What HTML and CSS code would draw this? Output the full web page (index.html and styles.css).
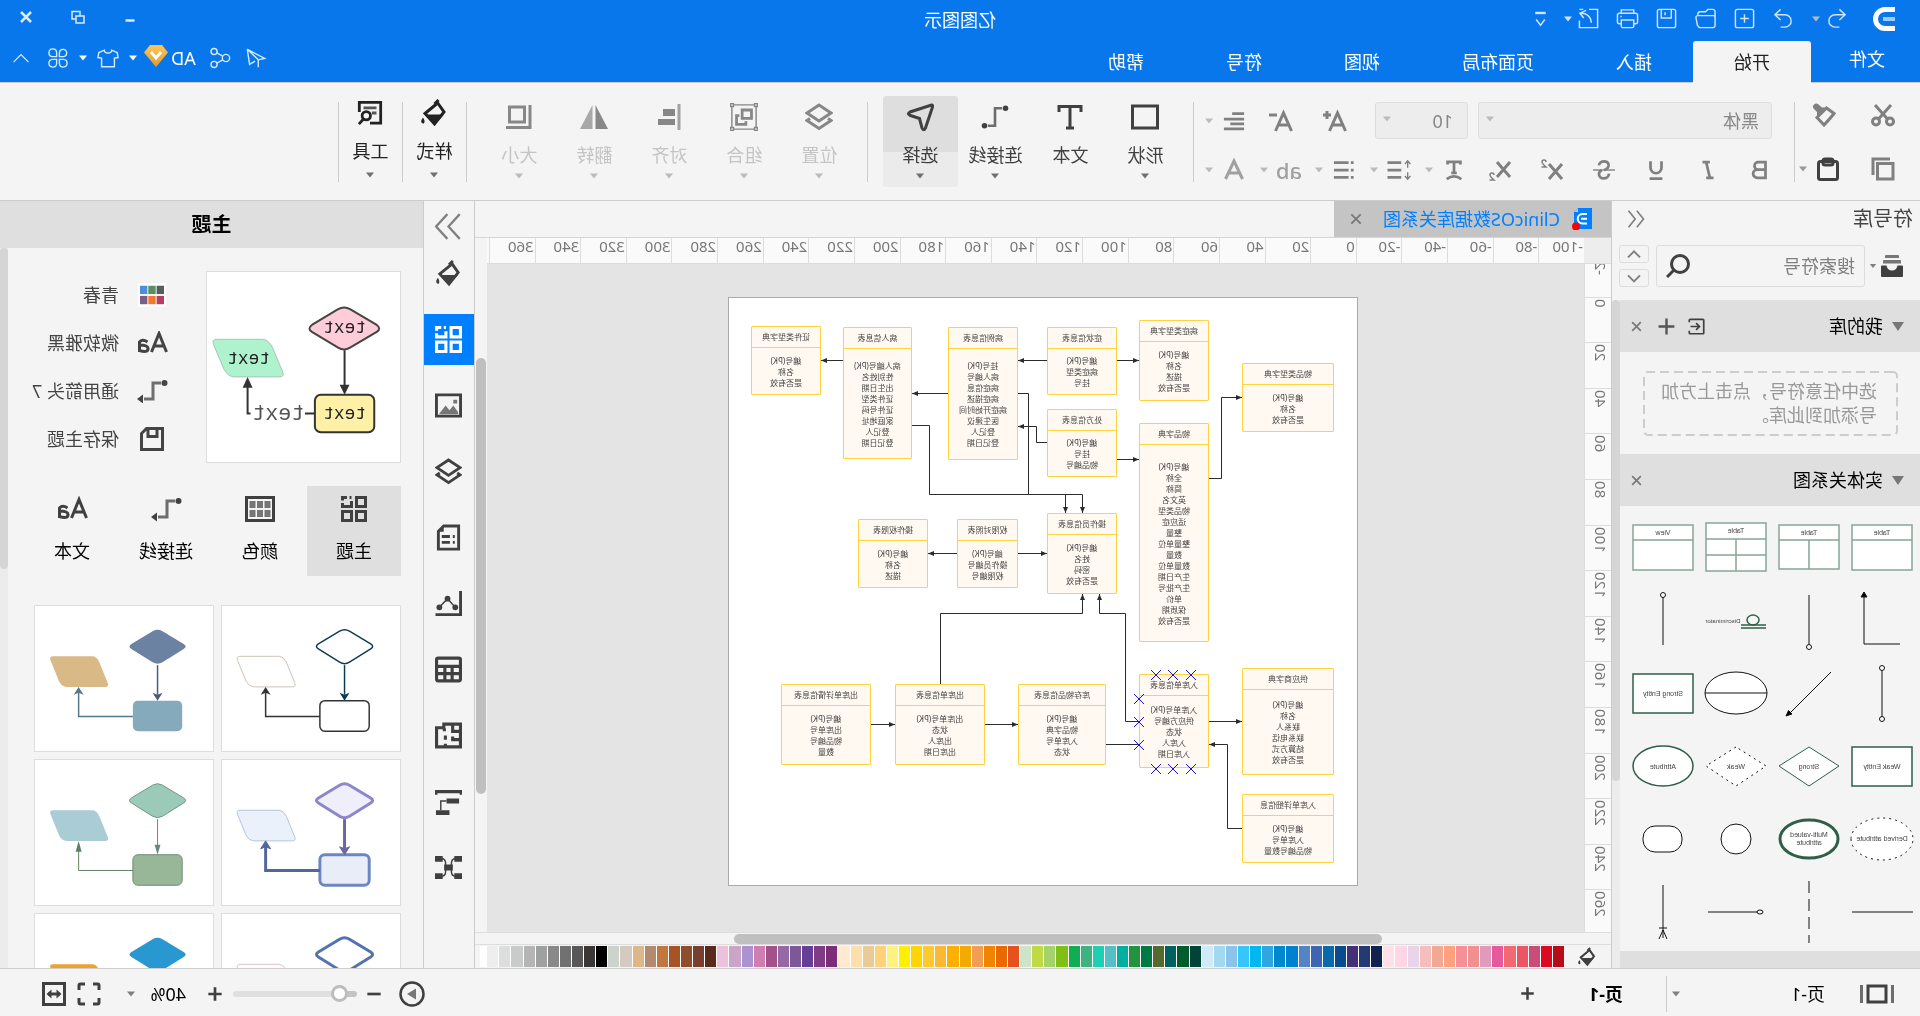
FILE: index.html
```html
<!DOCTYPE html>
<html lang="zh-CN">
<head>
<meta charset="utf-8">
<meta name="viewport" content="width=device-width, initial-scale=1">
<title>亿图图示</title>
<link rel="stylesheet" href="styles.css">
</head>
<body>
<svg class="defs" aria-hidden="true">
  <defs>
    <symbol id="i-caret" viewBox="0 0 10 6"><path class="solid" d="M1 0.5h8L5 5.5z"/></symbol>
    <symbol id="i-undo" viewBox="0 0 24 24"><path d="M9 2.500L3 8l6 5.500M3.500 8h10a6.500 6.500 0 0 1 0 13H9"/></symbol>
    <symbol id="i-redo" viewBox="0 0 24 24"><path d="M15 2.500L21 8l-6 5.500M20.500 8h-10a6.500 6.500 0 0 0 0 13H15"/></symbol>
    <symbol id="i-new" viewBox="0 0 24 24"><rect x="2.500" y="2.500" width="19" height="19" rx="2"/><path d="M12 7.500v9M7.500 12h9"/></symbol>
    <symbol id="i-open" viewBox="0 0 24 24"><path d="M2 9.500V19a2.500 2.500 0 0 0 2.500 2.500h14L20.500 19 22 11a2 2 0 0 0-2-2H4a2 2 0 0 0-2 2M2 10V5a2.500 2.500 0 0 1 2.500-2.500h5L12 5h5.500A2.500 2.500 0 0 1 20 7.500V9"/></symbol>
    <symbol id="i-disk" viewBox="0 0 24 24"><rect x="2.500" y="2.500" width="19" height="19" rx="2"/><path d="M7 2.500v9h10.500v-9M13.500 5.500v3"/></symbol>
    <symbol id="i-print" viewBox="0 0 24 24"><path d="M5.500 6.500V3h13v3.500M5 17.500H3.500A2 2 0 0 1 1.500 15.500V8.500a2 2 0 0 1 2-2h17a2 2 0 0 1 2 2v7a2 2 0 0 1-2 2H19M5.500 13.500h13V20a1.500 1.500 0 0 1-1.500 1.500H7A1.500 1.500 0 0 1 5.500 20zM18 10h1.500"/></symbol>
    <symbol id="i-export" viewBox="0 0 24 24"><path d="M11.500 2.500H2.500v19h19V14M14.500 3.500L21 6.500l-4 5M20.500 6.500C14 6 9.500 10 9 16.500M21.500 2.500h-4"/></symbol>
    <symbol id="i-custom" viewBox="0 0 24 24"><path class="solid" d="M6.500 5h11v2.500h-11z"/><path d="M7.500 13l4.500 6 4.500-6"/></symbol>
    <symbol id="i-plane" viewBox="0 0 24 24"><path d="M21.500 2.500L2.500 12.500l7 1.500zM21.500 2.500L19 19l-6-3.500M21.500 2.500L9.500 14v8"/></symbol>
    <symbol id="i-share" viewBox="0 0 24 24"><circle cx="5.500" cy="12" r="4"/><circle cx="18.500" cy="5" r="3.300"/><circle cx="18.500" cy="19" r="3.300"/><path d="M9 10l6.500-3.500M9 14l6.500 3.500"/></symbol>
    <symbol id="i-shirt" viewBox="0 0 24 24"><path d="M8 3.500a4 3 0 0 0 8 0l6 2.500 1 5.500-4 .5V21.500H5V12l-4-.5L2 6z"/></symbol>
    <symbol id="i-clover" viewBox="0 0 24 24"><path d="M10.500 10.500H6A4 4 0 1 1 10.500 6zM13.500 10.500V6A4.200 4.200 0 1 1 18 10.500zM10.500 13.500V18A4.200 4.200 0 1 1 6 13.500zM13.500 13.500H18A4.200 4.200 0 1 1 13.500 18z"/></symbol>
    <symbol id="i-up" viewBox="0 0 24 24"><path d="M3 17l9-9 9 9"/></symbol>
    <symbol id="i-down" viewBox="0 0 24 24"><path d="M3 8l9 9 9-9"/></symbol>
    <symbol id="i-x" viewBox="0 0 24 24"><path d="M4 4l16 16M20 4L4 20"/></symbol>
    <symbol id="i-plus" viewBox="0 0 24 24"><path d="M12 2v20M2 12h20"/></symbol>
    <symbol id="i-minus" viewBox="0 0 24 24"><path d="M2 12h20"/></symbol>
    <symbol id="i-left2" viewBox="0 0 24 24"><path d="M11 2L3 12l8 10M21 2l-8 10 8 10"/></symbol>
    <symbol id="i-right2" viewBox="0 0 24 24"><path d="M2 1l10 11L2 23M13 1l10 11L13 23"/></symbol>
    <symbol id="i-cut" viewBox="0 0 24 24"><path d="M4 2l12.500 14M20 2L7.500 16"/><circle cx="5" cy="18.500" r="3.500"/><circle cx="19" cy="18.500" r="3.500"/></symbol>
    <symbol id="i-brush" viewBox="0 0 24 24"><path d="M9.500 5L2 10.500q3 4 10 11.500l7-7.500z"/><path class="solid" d="M8.500 4.500h5.500l3.500-3a3 3 0 0 1 4.500 4.500l-3 3V15z"/></symbol>
    <symbol id="i-copy" viewBox="0 0 24 24"><path d="M2 6.500h15.500V22H2zM5 2h17v16"/></symbol>
    <symbol id="i-paste" viewBox="0 0 24 24"><rect x="2.500" y="4.500" width="19" height="18" rx="2"/><rect x="7" y="2" width="10" height="6" rx="2"/></symbol>
    <symbol id="i-bold" viewBox="0 0 24 24"><path d="M6 3.500h8a4 4 0 0 1 0 8H6zM6 11.500h9a4.500 4.500 0 0 1 0 9H6z"/></symbol>
    <symbol id="i-italic" viewBox="0 0 24 24"><path d="M10 3.500h8M6 20.500h8M14 3.500l-4 17"/></symbol>
    <symbol id="i-under" viewBox="0 0 24 24"><path d="M6 2.500v7a6 6 0 0 0 12 0v-7M5 21.500h14"/></symbol>
    <symbol id="i-strike" viewBox="0 0 24 24"><path d="M17.500 7C17 1 6.500 1 7 7q.5 4 5 5M6.500 16c.5 7 11.500 7 11 0q-.3-2.500-3-4"/><path class="fine" d="M0 12h24"/></symbol>
    <symbol id="i-sup" viewBox="0 0 24 24"><path d="M2 6l13 15M15 6L2 21"/><path class="fine" d="M18 4q0-2 2-2t2 2q0 1.500-4 5h4.500"/></symbol>
    <symbol id="i-sub" viewBox="0 0 24 24"><path d="M2 4l13 15M15 4L2 19"/><path class="fine" d="M18 17q0-2 2-2t2 2q0 1.500-4 5h4.500"/></symbol>
    <symbol id="i-textcase" viewBox="0 0 24 24"><path d="M5 6V3h14v3M12 3v12M9 15h6M4 22q8-6 16 0"/></symbol>
    <symbol id="i-spacing" viewBox="0 0 28 24"><path d="M11 4h15M11 12h15M11 20h15"/><path class="fine" d="M4 2.500v7M4 14.500v7M1 5.500l3-3.500 3 3.500M1 18.500L4 22l3-3.500"/></symbol>
    <symbol id="i-list" viewBox="0 0 24 24"><path d="M7 4h16M7 12h16M7 20h16M1.500 4h3M1.500 12h3M1.500 20h3"/></symbol>
    <symbol id="i-aup" viewBox="0 0 24 24"><path d="M1.500 22L9.500 4l8 18M5 16h9"/><path d="M20 2v8M16 6h8"/></symbol>
    <symbol id="i-adown" viewBox="0 0 24 24"><path d="M1.500 22L9.500 4l8 18M5 16h9M16 6h8"/></symbol>
    <symbol id="i-acolor" viewBox="0 0 24 24"><path d="M3.500 21L12 3l8.500 18M7 15h10"/></symbol>
    <symbol id="i-align" viewBox="0 0 24 24"><path d="M1 4h13M1 10h22M1 15h15M1 20.500h22"/></symbol>
    <symbol id="i-rect" viewBox="0 0 28 28"><path d="M1.500 3h25v22h-25z"/></symbol>
    <symbol id="i-text" viewBox="0 0 28 28"><path d="M3 9V3.500h22V9M14 3.500V25M10 25h8"/></symbol>
    <symbol id="i-conn" viewBox="0 0 32 28"><circle class="solid" cx="4" cy="4" r="3.200"/><circle class="solid" cx="28" cy="24" r="3.200"/><path class="soft" d="M8 4h8v20h8"/></symbol>
    <symbol id="i-select" viewBox="0 0 28 28"><path d="M2.500 2q-1.500 0-1 2l7 21q2 3.500 3.500 0l2.500-9.500 9-3q4-1.500.5-3.500z"/></symbol>
    <symbol id="i-layers" viewBox="0 0 28 28"><path d="M14 2l12 8-12 8L2 10zM5 15.500L2 17.500l12 8 12-8-3-2"/></symbol>
    <symbol id="i-group" viewBox="0 0 30 30"><path class="fine" d="M4 2h22M4 28h22M2 4v22M28 4v22M0.700 .7h3v3h-3zM26.300 .7h3v3h-3zM.7 26.300h3v3h-3zM26.300 26.300h3v3h-3z"/><path d="M7 7.500h10v9H7zM20 13.500h3V23H13v-3.500"/></symbol>
    <symbol id="i-alignobj" viewBox="0 0 28 28"><path class="soft" d="M4 1v26"/><path class="solid" d="M8 6h12v7H8zM8 16h17v6H8z"/></symbol>
    <symbol id="i-flip" viewBox="0 0 28 28"><path class="solid" d="M12.500 2v24H0z"/><path class="solid faded" d="M15.500 2v24H28z"/></symbol>
    <symbol id="i-size" viewBox="0 0 28 28"><path d="M8.500 4h15v15h-15zM3 2v22.500h24"/></symbol>
    <symbol id="i-bucket" viewBox="0 0 26 28"><path d="M10 3L3 13l9.500 12 9.500-10.500L10.500 5M8.500 1l4 4"/><path class="solid" d="M3 15.500h19L12.500 26zM24 18.500q3 4 1 5.500t-2.500-1q-.2-2 1.500-4.500z"/></symbol>
    <symbol id="i-tools" viewBox="0 0 28 28"><path d="M14 25H2.500V2.500h23V13"/><path class="soft" d="M7 8.500h14M7 14h5"/><circle cx="18" cy="17" r="4.500"/><path d="M21 20.500l5 5.500"/></symbol>
    <symbol id="i-library" viewBox="0 0 22 22"><path class="solid soft0" d="M5 0h12a1 1 0 0 1 1 1v2H4V1a1 1 0 0 1 1-1zM3 5h16a1 1 0 0 1 1 1v2.500H2V6a1 1 0 0 1 1-1z"/><path class="solid" d="M1 10.500h4.500q1 5 5.500 5t5.500-5H21a1 1 0 0 1 1 1V21a1 1 0 0 1-1 1H1a1 1 0 0 1-1-1v-9.500a1 1 0 0 1 1-1z"/></symbol>
    <symbol id="i-find" viewBox="0 0 24 24"><circle cx="10" cy="10" r="8.500"/><path d="M16 16l7 7"/></symbol>
    <symbol id="i-import" viewBox="0 0 20 20"><path d="M18.500 5V2.500a1 1 0 0 0-1-1h-15a1 1 0 0 0-1 1v15a1 1 0 0 0 1 1h15a1 1 0 0 0 1-1V15M17 10H7M10.500 6L6.500 10l4 4"/></symbol>
    <symbol id="i-theme" viewBox="0 0 26 26"><path d="M1.500 1.500h9v9h-9zM1.500 15.500h9v9h-9zM15.500 15.500h9v9h-9zM15.500 5v5.500h9V7M15.500 1.500h2M20 1.500h4.500v3"/></symbol>
    <symbol id="i-image" viewBox="0 0 28 26"><path d="M1.500 2h25v22h-25z"/><path class="solid faded" d="M4 20l5-7 4 5 4-5 7 9H4zM5 7h4v4H5z"/></symbol>
    <symbol id="i-note" viewBox="0 0 26 28"><path d="M2.500 2H18l5.500 5.500V26h-21zM6.500 13h2M11.500 13H20M6.500 19h2M11.500 19H20"/><path class="solid" d="M24 8l-6-6v6z"/></symbol>
    <symbol id="i-chart" viewBox="0 0 28 28"><path d="M1.500 1v24.500h26"/><circle class="solid" cx="7" cy="18" r="3"/><circle class="solid" cx="15" cy="9" r="3"/><circle class="solid" cx="23.500" cy="18" r="3"/><path class="fine" d="M7 18l8-9 8.500 9"/></symbol>
    <symbol id="i-table" viewBox="0 0 26 26"><rect x="1.500" y="2" width="23" height="22" rx="1.500"/><path d="M2 10h22M2 17h22M9.500 10v14M16.500 10v14"/></symbol>
    <symbol id="i-plan" viewBox="0 0 26 26"><path d="M1.500 2v22h23V5.500h-7V2zM1.500 9H9V2M17 6v3M1.500 17H9v-3M16 24v-3M16 17v-4"/></symbol>
    <symbol id="i-gantt" viewBox="0 0 28 28"><path class="solid" d="M0 2h28v5h-2.500V5.500h-23V7H0zM3 11h13v5H3zM13 23h14v5H13z"/><path class="fine" d="M16 13.500h6V23"/></symbol>
    <symbol id="i-mind" viewBox="0 0 28 26"><path class="solid" d="M0 1h8v6H0zM20 1h8v6h-8zM0 19h8v6H0zM20 19h8v6h-8zM9.500 10h9v6h-9z"/><path class="fine" d="M7 4q4 0 4 5v8q0 5-4 5M21 4q-4 0-4 5v8q0 5 4 5"/></symbol>
    <symbol id="i-aa" viewBox="0 0 32 24"><path d="M1.500 21L9 2.500 16.500 21M4.500 15h9M20.500 11q5-3.500 8 0v10M28.500 14q-9 0-8.500 4t8.500 1.500"/></symbol>
    <symbol id="i-link" viewBox="0 0 32 24"><circle class="solid" cx="3.500" cy="4" r="3"/><path class="soft" d="M7 4h8v16h9"/><path class="solid" d="M25 15.500v9l6-4.500z"/></symbol>
    <symbol id="i-save2" viewBox="0 0 24 24"><path d="M1.500 1.500h16l5 5v16h-21zM7 1.500v8h9v-8"/></symbol>
    <symbol id="i-colors" viewBox="0 0 30 26"><path d="M1.500 1.500h27v23h-27z"/><path class="solid faded" d="M4.500 5h6v7h-6zM12 5h6v7h-6zM19.500 5h6v7h-6zM4.500 14h6v7h-6zM12 14h6v7h-6zM19.500 14h6v7h-6z"/></symbol>
    <symbol id="i-pages" viewBox="0 0 34 20"><path d="M8 2h18v16H8z"/><path class="soft" d="M1.500 1v18M32.500 1v18"/></symbol>
    <symbol id="i-full" viewBox="0 0 24 24"><path d="M2 8V3.500A1.500 1.500 0 0 1 3.500 2H8M16 2h4.500A1.500 1.500 0 0 1 22 3.500V8M22 16v4.500a1.500 1.500 0 0 1-1.500 1.500H16M8 22H3.500A1.500 1.500 0 0 1 2 20.500V16"/></symbol>
    <symbol id="i-fit" viewBox="0 0 24 24"><path d="M1.500 1.500h21v21h-21zM6 12h12"/><path class="solid" d="M9.500 7.500v9L4.500 12zM14.500 7.500v9l5-4.500z"/></symbol>
    <path id="t-dia" d="M51 25.500q5-3 10 0L82.500 38.500q4 2.500 0 5L61 57q-5 3-10 0L29.500 43.500q-4-2.500 0-5z"/>
    <rect id="t-box" x="31" y="96" width="50" height="31" rx="5"/>
    <path id="t-par" d="M122 51h40q4 0 2.500 4L156 76q-3 6-8 6h-39q-4 0-2.500-4L115 57q3-6 7-6z"/>
    <path id="t-l1" d="M56 60v30"/><path id="t-l2" d="M81 112h55V86"/>
    <path id="t-a1" d="M56 96l-5-8 5 2 5-2z"/><path id="t-a2" d="M136 82l-5 8 5-2 5 2z"/>
    <marker id="arrow" viewBox="0 0 6 6" refX="6" refY="3" markerWidth="6" markerHeight="6" markerUnits="userSpaceOnUse" orient="auto"><path d="M0 .5L6 3 0 5.500z" fill="#2b2b2b"/></marker>
    <linearGradient id="gold" x1="0" y1="0" x2="0" y2="1"><stop offset="0" stop-color="#ffc658"/><stop offset="1" stop-color="#e39a2b"/></linearGradient>
  </defs>
</svg>

<div class="app">
  <header class="titlebar">
    <div class="quick">
      <svg class="logo" viewBox="0 0 22 24"><path d="M0 2.500h10a9.500 9.500 0 0 1 0 19H0" fill="none" stroke="#fff" stroke-width="5"/><path d="M0 12h12" stroke="#9fcbfb" stroke-width="4"/></svg>
      <button class="q q-undo" aria-label="撤销"><svg><use href="#i-undo"/></svg></button>
      <button class="q q-caret" aria-label="撤销列表"><svg class="caret dim"><use href="#i-caret"/></svg></button>
      <button class="q q-redo" aria-label="重做"><svg><use href="#i-redo"/></svg></button>
      <button class="q" aria-label="新建"><svg><use href="#i-new"/></svg></button>
      <button class="q" aria-label="打开"><svg><use href="#i-open"/></svg></button>
      <button class="q" aria-label="保存"><svg><use href="#i-disk"/></svg></button>
      <button class="q" aria-label="打印"><svg><use href="#i-print"/></svg></button>
      <button class="q" aria-label="导出"><svg><use href="#i-export"/></svg></button>
      <button class="q q-caret q-near" aria-label="导出选项"><svg class="caret"><use href="#i-caret"/></svg></button>
      <button class="q q-more" aria-label="自定义"><svg><use href="#i-custom"/></svg></button>
    </div>
    <h1>亿图图示</h1>
    <div class="winctl">
      <button aria-label="最小化"><svg viewBox="0 0 14 14"><path d="M2.500 10.500h9"/></svg></button>
      <button aria-label="还原"><svg viewBox="0 0 14 14"><path class="thin" d="M1 6h8v7H1zM5 6V1.500h8V9H9"/></svg></button>
      <button aria-label="关闭"><svg viewBox="0 0 14 14"><path d="M2 2l10 10M12 2L2 12"/></svg></button>
    </div>
  </header>

  <nav class="tabs">
    <button class="file">文件</button>
    <button class="active">开始</button>
    <button>插入</button>
    <button>页面布局</button>
    <button>视图</button>
    <button>符号</button>
    <button>帮助</button>
    <div class="tabtools">
      <button aria-label="发送"><svg><use href="#i-plane"/></svg></button>
      <button aria-label="分享"><svg><use href="#i-share"/></svg></button>
      <button class="vip">AD<svg viewBox="0 0 24 22"><path class="gem" d="M6 0h12l6 7.500L12 22 0 7.500z"/><path class="vee" d="M7 7l5 6 5-6"/></svg></button>
      <svg class="caret"><use href="#i-caret"/></svg>
      <button class="narrow" aria-label="皮肤"><svg><use href="#i-shirt"/></svg></button>
      <svg class="caret"><use href="#i-caret"/></svg>
      <button class="narrow" aria-label="应用"><svg><use href="#i-clover"/></svg></button>
      <button class="fold" aria-label="收起功能区"><svg><use href="#i-up"/></svg></button>
    </div>
  </nav>

  <section class="ribbon">
    <div class="clip">
      <button aria-label="剪切"><svg class="i"><use href="#i-cut"/></svg></button>
      <button aria-label="格式刷"><svg class="i"><use href="#i-brush"/></svg></button>
      <button aria-label="复制"><svg class="i"><use href="#i-copy"/></svg></button>
      <button class="paste" aria-label="粘贴"><svg class="i"><use href="#i-paste"/></svg><svg class="caret"><use href="#i-caret"/></svg></button>
    </div>
    <span class="sep"></span>
    <div class="font">
      <div class="row row1">
        <label class="combo combo-font"><select aria-label="字体"><option>黑体</option></select><svg class="caret"><use href="#i-caret"/></svg></label>
        <label class="combo combo-size"><select aria-label="字号"><option>10</option></select><svg class="caret"><use href="#i-caret"/></svg></label>
        <button class="wide first" aria-label="增大字号"><svg class="i"><use href="#i-aup"/></svg></button>
        <button class="wide" aria-label="减小字号"><svg class="i"><use href="#i-adown"/></svg></button>
        <button class="pair" aria-label="对齐"><svg class="i s"><use href="#i-align"/></svg><svg class="caret"><use href="#i-caret"/></svg></button>
      </div>
      <div class="row row2">
        <button class="wide" aria-label="加粗"><svg class="i s"><use href="#i-bold"/></svg></button>
        <button class="wide" aria-label="斜体"><svg class="i s"><use href="#i-italic"/></svg></button>
        <button class="wide" aria-label="下划线"><svg class="i s"><use href="#i-under"/></svg></button>
        <button class="wide" aria-label="删除线"><svg class="i s"><use href="#i-strike"/></svg></button>
        <button class="wide" aria-label="上标"><svg class="i"><use href="#i-sup"/></svg></button>
        <button class="wide" aria-label="下标"><svg class="i"><use href="#i-sub"/></svg></button>
        <button class="pair" aria-label="文字方向"><svg class="i s"><use href="#i-textcase"/></svg><svg class="caret"><use href="#i-caret"/></svg></button>
        <button class="pair" aria-label="行距"><svg class="i w28"><use href="#i-spacing"/></svg><svg class="caret"><use href="#i-caret"/></svg></button>
        <button class="pair" aria-label="项目符号"><svg class="i s"><use href="#i-list"/></svg><svg class="caret"><use href="#i-caret"/></svg></button>
        <button class="pair pale" aria-label="突出显示"><span class="ab">ab</span><svg class="caret"><use href="#i-caret"/></svg></button>
        <button class="pair pale" aria-label="字体颜色"><svg class="i"><use href="#i-acolor"/></svg><svg class="caret"><use href="#i-caret"/></svg></button>
      </div>
    </div>
    <span class="sep"></span>
    <div class="big">
      <button><svg class="i"><use href="#i-rect"/></svg>形状<svg class="caret"><use href="#i-caret"/></svg></button>
      <button><svg class="i"><use href="#i-text"/></svg>文本</button>
      <button><svg class="i"><use href="#i-conn"/></svg>连接线<svg class="caret"><use href="#i-caret"/></svg></button>
      <button class="on"><svg class="i"><use href="#i-select"/></svg>选择<svg class="caret"><use href="#i-caret"/></svg></button>
    </div>
    <span class="sep"></span>
    <div class="big off">
      <button><svg class="i"><use href="#i-layers"/></svg>位置<svg class="caret"><use href="#i-caret"/></svg></button>
      <button><svg class="i"><use href="#i-group"/></svg>组合<svg class="caret"><use href="#i-caret"/></svg></button>
      <button><svg class="i"><use href="#i-alignobj"/></svg>对齐<svg class="caret"><use href="#i-caret"/></svg></button>
      <button><svg class="i"><use href="#i-flip"/></svg>翻转<svg class="caret"><use href="#i-caret"/></svg></button>
      <button><svg class="i"><use href="#i-size"/></svg>大小<svg class="caret"><use href="#i-caret"/></svg></button>
    </div>
    <span class="sep"></span>
    <div class="big tight"><button><svg class="i"><use href="#i-bucket"/></svg>样式<svg class="caret"><use href="#i-caret"/></svg></button></div>
    <span class="sep"></span>
    <div class="big tight"><button><svg class="i"><use href="#i-tools"/></svg>工具<svg class="caret"><use href="#i-caret"/></svg></button></div>
    <span class="sep"></span>
  </section>

  <main class="main">
    <aside class="symbols">
      <div class="sym-title"><h2>符号库</h2><button aria-label="收起"><svg class="i"><use href="#i-left2"/></svg></button></div>
      <div class="sym-search">
        <button class="lib" aria-label="符号库菜单"><svg class="i"><use href="#i-library"/></svg><svg class="caret"><use href="#i-caret"/></svg></button>
        <label class="search"><input type="text" placeholder="搜索符号" aria-label="搜索符号"><svg class="i"><use href="#i-find"/></svg></label>
        <div class="spin"><button aria-label="上一个"><svg class="i"><use href="#i-up"/></svg></button><button aria-label="下一个"><svg class="i"><use href="#i-down"/></svg></button></div>
      </div>
      <div class="sym-body">
        <div class="sym-list">
          <div class="sec"><i class="tri"></i><h3>我的库</h3><button class="b30 dark" aria-label="导入"><svg class="i"><use href="#i-import"/></svg></button><button class="b30 mid" aria-label="新增"><svg class="i"><use href="#i-plus"/></svg></button><button class="b30" aria-label="关闭"><svg class="i"><use href="#i-x"/></svg></button></div>
          <div class="drop"><svg class="dash"><rect x="1" y="1" rx="4"/></svg><p>选中任意符号，点击上方加号添加到此库。</p></div>
          <div class="sec"><i class="tri"></i><h3>实体关系图</h3><button class="b30" aria-label="关闭"><svg class="i"><use href="#i-x"/></svg></button></div>
          <div class="shapes">
            <svg viewBox="0 0 73 73" class="tb"><path d="M6 14h60v45H6zM6 29h60"/><text x="36" y="24">Table</text></svg>
            <svg viewBox="0 0 73 73" class="tb"><path d="M6 14h60v44H6zM6 29h60M36 29v29"/><text x="36" y="24">Table</text></svg>
            <svg viewBox="0 0 73 73" class="tb"><path d="M6 12h60v48H6zM6 28h60M36 28v32M6 44h60"/><text x="36" y="22">Table</text></svg>
            <svg viewBox="0 0 73 73" class="tb"><path d="M6 14h60v45H6zM6 29h60"/><text x="36" y="24">View</text></svg>
            <svg viewBox="0 0 73 73" class="bk"><path class="nf" d="M18 60h36V12"/><path class="sl" d="M54 8l-3 5h6z"/></svg>
            <svg viewBox="0 0 73 73" class="bk"><path class="nf" d="M36 11v49"/><circle cx="36" cy="63" r="2.500"/></svg>
            <svg viewBox="0 0 73 73" class="gr"><ellipse class="nf" cx="19" cy="36" rx="6" ry="5"/><path class="nf" d="M6 41h25M6 44h25"/><text class="tiny" x="49" y="39">Discriminator</text></svg>
            <svg viewBox="0 0 73 73" class="bk"><path class="nf" d="M36 13v48"/><circle cx="36" cy="11" r="2.500"/></svg>
            <svg viewBox="0 0 73 73" class="bk"><path class="nf" d="M36 12v48"/><circle cx="36" cy="11" r="2.500"/><circle cx="36" cy="62" r="2.500"/></svg>
            <svg viewBox="0 0 73 73" class="bk"><path class="nf thin" d="M14 15l43 43"/><path class="sl" d="M59 59l-6-2 3.500-3.500z"/></svg>
            <svg viewBox="0 0 73 73" class="bk"><ellipse cx="36" cy="36" rx="31" ry="21"/><path class="nf" d="M5 36h62"/></svg>
            <svg viewBox="0 0 73 73" class="gr"><rect x="6" y="17" width="60" height="39"/><text x="36" y="39">Strong Entity</text></svg>
            <svg viewBox="0 0 73 73" class="gr"><rect x="6" y="17" width="60" height="39"/><text x="36" y="39">Weak Entity</text></svg>
            <svg viewBox="0 0 73 73" class="gr thin"><path d="M36 17l30 19-30 20L6 36z"/><text x="36" y="39">Strong</text></svg>
            <svg viewBox="0 0 73 73" class="bk dot"><path d="M36 17l30 19-30 20L6 36z"/><text x="36" y="39">Weak</text></svg>
            <svg viewBox="0 0 73 73" class="gr"><ellipse cx="36" cy="36" rx="30" ry="20"/><text x="36" y="39">Attribute</text></svg>
            <svg viewBox="0 0 73 73" class="bk dot"><ellipse cx="36" cy="36" rx="31" ry="21"/><text x="36" y="38">Derived attribute</text></svg>
            <svg viewBox="0 0 73 73" class="gr thick"><ellipse cx="36" cy="36" rx="29" ry="19"/><text x="36" y="34">Multi-valued</text><text x="36" y="42">attribute</text></svg>
            <svg viewBox="0 0 73 73" class="bk"><circle cx="36" cy="36" r="15"/></svg>
            <svg viewBox="0 0 73 73" class="bk"><rect x="17" y="23" width="39" height="26" rx="12"/></svg>
            <svg viewBox="0 0 73 73" class="bk"><path class="nf" d="M5 36h61"/></svg>
            <svg viewBox="0 0 73 73" class="bk"><path class="nf" stroke-dasharray="12 6" d="M36 5v62"/></svg>
            <svg viewBox="0 0 73 73" class="bk"><path class="nf" d="M14 36h50"/><ellipse cx="12" cy="36" rx="3" ry="2"/></svg>
            <svg viewBox="0 0 73 73" class="bk"><path class="nf" d="M36 9v53M32 52h8M36 54l-4 9M36 54l4 9"/></svg>
          </div>
          <div class="next"></div>
        </div>
        <div class="track"><i class="thumb thumb-sym"></i></div>
      </div>
    </aside>

    <section class="doc">
      <div class="doctabs">
        <div class="doctab"><svg viewBox="0 0 22 22"><path d="M2 0h14l4 4v15a2 2 0 0 1-2 2H2z" fill="#0080ff"/><path d="M16 0v4h4z" fill="#9dceff"/><path d="M7 6h4.500a4.500 4.500 0 0 1 0 9.500H7M7 10.700h6" fill="none" stroke="#fff" stroke-width="2"/><circle cx="18" cy="18.500" r="4" fill="#f00"/></svg><span>ClinicOS数据库关系图</span><button aria-label="关闭文档"><svg class="i"><use href="#i-x"/></svg></button></div>
      </div>
      <div class="board">
        <div class="corner"></div>
        <div class="hruler"><span>-100</span><span>-80</span><span>-60</span><span>-40</span><span>-20</span><span>0</span><span>20</span><span>40</span><span>60</span><span>80</span><span>100</span><span>120</span><span>140</span><span>160</span><span>180</span><span>200</span><span>220</span><span>240</span><span>260</span><span>280</span><span>300</span><span>320</span><span>340</span><span>360</span></div>
        <div class="vscroll"><i class="thumb"></i></div>
        <div class="vruler"><div class="vscale"><span><b>-20</b></span><span><b>0</b></span><span><b>20</b></span><span><b>40</b></span><span><b>60</b></span><span><b>80</b></span><span><b>100</b></span><span><b>120</b></span><span><b>140</b></span><span><b>160</b></span><span><b>180</b></span><span><b>200</b></span><span><b>220</b></span><span><b>240</b></span><span><b>260</b></span></div></div>
        <div class="canvas">
          <div class="page">
            <svg class="wires" viewBox="0 0 630 589">
              <path d="M241 63.500H219"/><path d="M149 181.500H136.500V100.500H116"/><path d="M241 162.500H219"/><path d="M311 63.500H340"/><path d="M311 145.500H321.500V129.500H340"/><path d="M410 96.500H446"/><path d="M515 63.500H537"/><path d="M340 96.500H329.500V197.500H292.500V216"/><path d="M446 128.500H428.500V197.500H275.500V216"/><path d="M340 256.500H311"/><path d="M401 256.500H430"/><path d="M417.500 387V316.500H275.500V297"/><path d="M219 424.500H232.500V316.500H258.500V297"/><path d="M149 424.500H116"/><path d="M116 531.500H130.500V447.500H149"/><path d="M373 427.500H340"/><path d="M487 427.500H463"/><path class="plain" d="M252 447.500H219"/>
            </svg>
            <article class="node" style="left:149px;top:23px;width:70px;height:81px"><h4>病症类型字典</h4><p>编号(PK)<br>名称<br>描述<br>是否有效</p></article>
            <article class="node" style="left:24px;top:66px;width:92px;height:69px"><h4>物品类型字典</h4><p>编号(PK)<br>名称<br>是否有效</p></article>
            <article class="node" style="left:149px;top:126px;width:70px;height:219px"><h4>物品字典</h4><p>编号(PK)<br>全称<br>简称<br>英文名<br>物品类型<br>适应症<br>整量<br>整量单位<br>数量<br>数量单位<br>生产日期<br>生产批号<br>单价<br>保质期<br>是否有效</p></article>
            <article class="node" style="left:537px;top:29px;width:70px;height:69px"><h4>证件类型字典</h4><p>编号(PK)<br>名称<br>是否有效</p></article>
            <article class="node" style="left:446px;top:30px;width:69px;height:132px"><h4>病人信息表</h4><p>病人编号(PK)<br>性别姓名<br>出生日期<br>证件类型<br>证件号码<br>家庭地址<br>登记人<br>登记日期</p></article>
            <article class="node" style="left:340px;top:30px;width:70px;height:133px"><h4>病例信息表</h4><p>挂号(PK)<br>病人编号<br>病症信息<br>病症描述<br>病症开始时间<br>医生建议<br>登记人<br>登记日期</p></article>
            <article class="node" style="left:241px;top:30px;width:70px;height:68px"><h4>症状信息表</h4><p>编号(PK)<br>病症类型<br>挂号</p></article>
            <article class="node" style="left:241px;top:112px;width:70px;height:68px"><h4>处方信息表</h4><p>编号(PK)<br>挂号<br>物品编号</p></article>
            <article class="node" style="left:241px;top:216px;width:70px;height:81px"><h4>操作员信息表</h4><p>编号(PK)<br>姓名<br>密码<br>是否有效</p></article>
            <article class="node" style="left:340px;top:222px;width:61px;height:69px"><h4>权限对照表</h4><p>编号(PK)<br>操作员编号<br>权限编号</p></article>
            <article class="node" style="left:430px;top:222px;width:70px;height:69px"><h4>操作权限表</h4><p>编号(PK)<br>名称<br>描述</p></article>
            <article class="node" style="left:149px;top:377px;width:70px;height:94px"><h4>入库单信息表</h4><p>入库单号(PK)<br>供应方编号<br>状态<br>入库人<br>入库日期</p></article>
            <article class="node" style="left:24px;top:371px;width:92px;height:107px"><h4>供应商字典</h4><p>编号(PK)<br>名称<br>联系人<br>联系电话<br>结算方式<br>是否有效</p></article>
            <article class="node" style="left:24px;top:497px;width:92px;height:69px"><h4>入库单详细信息</h4><p>编号(PK)<br>入库单号<br>物品编号数量</p></article>
            <article class="node" style="left:252px;top:387px;width:88px;height:81px"><h4>库存物品信息表</h4><p>编号(PK)<br>物品字典<br>入库单号<br>状态</p></article>
            <article class="node" style="left:373px;top:387px;width:90px;height:81px"><h4>出库单信息表</h4><p>出库单号(PK)<br>状态<br>出库人<br>出库日期</p></article>
            <article class="node" style="left:487px;top:387px;width:90px;height:81px"><h4>出库单详情信息表</h4><p>编号(PK)<br>出库单号<br>物品编号<br>数量</p></article>
            <svg class="wires marks" viewBox="0 0 630 589">
              <path d="M162 373l10 10m0-10l-10 10M180 373l10 10m0-10l-10 10M197 373l10 10m0-10l-10 10M162 467l10 10m0-10l-10 10M180 467l10 10m0-10l-10 10M197 467l10 10m0-10l-10 10M214 397l10 10m0-10l-10 10M214 420l10 10m0-10l-10 10M214 443l10 10m0-10l-10 10"/>
            </svg>
          </div>
        </div>
      </div>
      <div class="hscroll"><i class="thumb"></i></div>
      <div class="palette">
        <button aria-label="填充"><svg class="i"><use href="#i-bucket"/></svg></button>
        <div class="swatches"><i style="background:#b50e1a"></i><i style="background:#dc0a1e"></i><i style="background:#c94f78"></i><i style="background:#eb5566"></i><i style="background:#f06a72"></i><i style="background:#e65a9b"></i><i style="background:#e29abb"></i><i style="background:#f09090"></i><i style="background:#f59099"></i><i style="background:#ffa07f"></i><i style="background:#f2a994"></i><i style="background:#f5bdbb"></i><i style="background:#e9d4ea"></i><i style="background:#fed6e6"></i><i style="background:#ffe0e6"></i><i style="background:#10234f"></i><i style="background:#233b72"></i><i style="background:#432f7a"></i><i style="background:#0a4a8f"></i><i style="background:#0869ad"></i><i style="background:#3a66b3"></i><i style="background:#5484c6"></i><i style="background:#0080d0"></i><i style="background:#0088cc"></i><i style="background:#2ea7e0"></i><i style="background:#00b7f0"></i><i style="background:#36c7fa"></i><i style="background:#8cc3ea"></i><i style="background:#a2d8f0"></i><i style="background:#d0ebf6"></i><i style="background:#004437"></i><i style="background:#005c2a"></i><i style="background:#00625f"></i><i style="background:#566a30"></i><i style="background:#007a45"></i><i style="background:#22943f"></i><i style="background:#00afa0"></i><i style="background:#55bfc4"></i><i style="background:#1fcfb4"></i><i style="background:#3db382"></i><i style="background:#0fae52"></i><i style="background:#7fbf18"></i><i style="background:#a5d26a"></i><i style="background:#c0da45"></i><i style="background:#cce5c9"></i><i style="background:#e6511f"></i><i style="background:#eb6a00"></i><i style="background:#f08500"></i><i style="background:#f29d55"></i><i style="background:#f2a900"></i><i style="background:#fdb000"></i><i style="background:#fbb833"></i><i style="background:#fcca2f"></i><i style="background:#fdd600"></i><i style="background:#fff000"></i><i style="background:#fff27f"></i><i style="background:#ffd27a"></i><i style="background:#eacb96"></i><i style="background:#ffdeae"></i><i style="background:#ffe9d0"></i><i style="background:#7b2d78"></i><i style="background:#7f3b86"></i><i style="background:#633f98"></i><i style="background:#7d5899"></i><i style="background:#9668a4"></i><i style="background:#a25288"></i><i style="background:#cf7eb0"></i><i style="background:#ab92d0"></i><i style="background:#c9a6c8"></i><i style="background:#ecc1dc"></i><i style="background:#59291c"></i><i style="background:#783f2e"></i><i style="background:#8f4e2b"></i><i style="background:#a65426"></i><i style="background:#c2773f"></i><i style="background:#b38a70"></i><i style="background:#deb788"></i><i style="background:#d4cac2"></i><i style="background:#ccd3cb"></i><i style="background:#000000"></i><i style="background:#3b3737"></i><i style="background:#595757"></i><i style="background:#717171"></i><i style="background:#898989"></i><i style="background:#9fa0a0"></i><i style="background:#b5b5b6"></i><i style="background:#c9caca"></i><i style="background:#dcdddd"></i><i style="background:#eeeeee"></i></div>
      </div>
    </section>

    <nav class="rail">
      <button class="close" aria-label="收起面板"><svg class="i"><use href="#i-right2"/></svg></button>
      <button aria-label="填充"><svg class="i"><use href="#i-bucket"/></svg></button>
      <button class="active" aria-label="主题"><svg class="i"><use href="#i-theme"/></svg></button>
      <button aria-label="图片"><svg class="i"><use href="#i-image"/></svg></button>
      <button aria-label="图层"><svg class="i"><use href="#i-layers"/></svg></button>
      <button aria-label="备注"><svg class="i"><use href="#i-note"/></svg></button>
      <button aria-label="图表"><svg class="i"><use href="#i-chart"/></svg></button>
      <button aria-label="表格"><svg class="i"><use href="#i-table"/></svg></button>
      <button aria-label="平面图"><svg class="i"><use href="#i-plan"/></svg></button>
      <button aria-label="甘特图"><svg class="i"><use href="#i-gantt"/></svg></button>
      <button aria-label="思维导图"><svg class="i"><use href="#i-mind"/></svg></button>
    </nav>

    <aside class="theme">
      <h2>主题</h2>
      <div class="theme-body">
        <div class="theme-content">
          <div class="current">
            <svg class="preview" viewBox="0 0 195 192">
              <path d="M50.500 37.500q6-3.500 12 0L89 53.500q5 3.500 0 7L62.500 76.500q-6 3.500-12 0L23.500 60.500q-5-3.500 0-7z" fill="#ffccd9" stroke="#444" stroke-width="2"/>
              <path d="M139 68h46q5.500 0 3.500 5L178 98q-4 8-11 8h-45q-5.500 0-3.500-5L129 76q4-8 10-8z" fill="#aff3ce" stroke="#a5c5b5"/>
              <rect x="26" y="124" width="60" height="38" rx="6" fill="#fff0a8" stroke="#333" stroke-width="2"/>
              <path d="M56 79v38M86 143h10M151 143h3v-28" fill="none" stroke="#333" stroke-width="2"/>
              <path d="M56 124l-5-10h10zM154 106l-5 11h10z" fill="#333"/>
              <text x="56" y="62">text</text><text x="153" y="93">text</text><text x="56" y="149">text</text><text class="lg" x="123" y="150">text</text>
            </svg>
            <ul>
              <li><button><svg class="pal" viewBox="0 0 30 26"><path fill="#fff" d="M0 0h30v26H0z"/><path fill="#555f5f" d="M2 3h8v9H2z"/><path fill="#5a8f60" d="M11 3h8v9h-8z"/><path fill="#4c8fe0" d="M20 3h8v9h-8z"/><path fill="#b33f62" d="M2 14h8v9H2z"/><path fill="#f47a2a" d="M11 14h8v9h-8z"/><path fill="#7b5e87" d="M20 14h8v9h-8z"/></svg>青春</button></li>
              <li><button><svg class="i"><use href="#i-aa"/></svg>微软雅黑</button></li>
              <li><button><svg class="i"><use href="#i-link"/></svg>通用箭头 7</button></li>
              <li><button><svg class="i"><use href="#i-save2"/></svg>保存主题</button></li>
            </ul>
          </div>
          <div class="kinds">
            <button class="active"><svg class="i"><use href="#i-theme"/></svg>主题</button>
            <button><svg class="i"><use href="#i-colors"/></svg>颜色</button>
            <button><svg class="i"><use href="#i-link"/></svg>连接线</button>
            <button><svg class="i"><use href="#i-aa"/></svg>文本</button>
          </div>
          <div class="gallery">
            <svg viewBox="0 0 180 147"><g fill="#fff"><use href="#t-dia" stroke="#0b3c55" stroke-width="1.500"/><use href="#t-par" stroke="#cdc4b2"/><use href="#t-box" stroke="#333" stroke-width="1.500"/></g><use href="#t-l1" stroke="#0b3c55" stroke-width="1.500"/><use href="#t-l2" fill="none" stroke="#333" stroke-width="1.500"/><use href="#t-a1" fill="#0b3c55"/><use href="#t-a2" fill="#333"/></svg>
            <svg viewBox="0 0 180 147"><use href="#t-dia" fill="#6b82a2"/><use href="#t-par" fill="#d9b985"/><use href="#t-box" fill="#84aabc"/><use href="#t-l1" stroke="#4a5b78" stroke-width="1.500"/><use href="#t-l2" fill="none" stroke="#55778a" stroke-width="1.500"/><use href="#t-a1" fill="#4a5b78"/><use href="#t-a2" fill="#55778a"/></svg>
            <svg viewBox="0 0 180 147"><use href="#t-dia" fill="#f0eefa" stroke="#8c87cb" stroke-width="3"/><use href="#t-par" fill="#eaf1fa" stroke="#b0c6de"/><use href="#t-box" fill="#e9edf8" stroke="#6c86c4" stroke-width="3"/><use href="#t-l1" stroke="#6b669f" stroke-width="3"/><use href="#t-l2" fill="none" stroke="#50669c" stroke-width="3"/><use href="#t-a1" fill="#6b669f" stroke="#6b669f"/><use href="#t-a2" fill="#50669c" stroke="#50669c"/></svg>
            <svg viewBox="0 0 180 147"><use href="#t-dia" fill="#9ccab9" stroke="#6f9484"/><use href="#t-par" fill="#aaccd5"/><use href="#t-box" fill="#98b798" stroke="#6d8d6f"/><use href="#t-l1" stroke="#67897a"/><use href="#t-l2" fill="none" stroke="#5f7d62"/><path fill="#67897a" d="M56 96l-3-10h6z"/><path fill="#5f7d62" d="M136 82l-3 11h6z"/></svg>
            <svg viewBox="0 0 180 147"><use href="#t-dia" fill="#fff" stroke="#5472b0" stroke-width="3"/><use href="#t-par" fill="#fff" stroke="#e2c0c8"/></svg>
            <svg viewBox="0 0 180 147"><use href="#t-dia" fill="#2a98d0"/><use href="#t-par" fill="#eca22b"/></svg>
          </div>
        </div>
        <div class="track"><i class="thumb thumb-theme"></i></div>
      </div>
    </aside>
  </main>

  <footer class="status">
    <button class="pages" aria-label="页面视图"><svg class="i"><use href="#i-pages"/></svg></button>
    <label class="pick"><select aria-label="页面"><option>页-1</option></select><svg class="caret"><use href="#i-caret"/></svg></label>
    <span class="sep"></span>
    <button class="cur">页-1</button>
    <button class="add" aria-label="添加页面"><svg class="i"><use href="#i-plus"/></svg></button>
    <div class="zoom">
      <button class="z40" aria-label="演示"><svg class="present" viewBox="0 0 26 26"><circle cx="13" cy="13" r="11.500" fill="none" stroke="#404040" stroke-width="2.500"/><path d="M9 7.500v11l9-5.500z" fill="#777"/></svg></button>
      <button class="z35" aria-label="缩小"><svg class="i s16"><use href="#i-minus"/></svg></button>
      <input type="range" min="0" max="100" value="8" aria-label="缩放">
      <button class="z35" aria-label="放大"><svg class="i s16"><use href="#i-plus"/></svg></button>
      <label class="pct"><select aria-label="缩放比例"><option>40%</option></select><svg class="caret"><use href="#i-caret"/></svg></label>
      <button class="z35" aria-label="全屏"><svg class="i"><use href="#i-full"/></svg></button>
      <button class="z35" aria-label="适合宽度"><svg class="i"><use href="#i-fit"/></svg></button>
    </div>
  </footer>
</div>
</body>
</html>
```
FILE: styles.css
```css
* { box-sizing: border-box; }
html, body { height: 100%; }
body {
  margin: 0;
  overflow: hidden;
  background: #f4f4f4;
  color: #333;
  font: 18px/24px "Noto Sans", "Noto Sans CJK SC", sans-serif;
}
h1, h2, h3, h4, p, ul { margin: 0; padding: 0; font-size: inherit; font-weight: normal; }
ul { list-style: none; }
button, select, input { margin: 0; padding: 0; border: 0; background: none; color: inherit; font: inherit; }
button { display: flex; align-items: center; justify-content: center; flex: none; }
select { appearance: none; }
svg { display: block; flex: none; }
.defs { position: absolute; width: 0; height: 0; }

/* the whole window is shown mirrored */
.app { display: flex; flex-direction: column; height: 100vh; transform: scaleX(-1); }

.i { width: 24px; height: 24px; fill: none; stroke: currentColor; stroke-width: 3; }
.solid { fill: currentColor; stroke: none; }
.soft { opacity: .75; }
.soft0, .faded { opacity: .7; }
.fine { stroke-width: 1.5; }
.caret { width: 10px; height: 6px; fill: currentColor; }
.sep { flex: none; width: 1px; height: 80px; background: #ccc; }
.thumb { display: block; border-radius: 5px; background: #bfbfbf; }

/* title bar */
.titlebar { display: grid; grid-template-columns: 1fr auto 1fr; height: 41px; background: #0877ec; color: #fff; }
.titlebar h1 { line-height: 40px; }
.quick { display: flex; align-items: center; height: 37px; padding-left: 25px; }
.logo { width: 22px; height: 24px; }
.q { width: 39px; color: #cfe4fb; }
.q svg { width: 23px; height: 23px; fill: none; stroke: currentColor; stroke-width: 1.5; }
.q svg.caret { width: 10px; height: 6px; fill: currentColor; stroke: none; }
.q svg.dim { color: #b9b9b9; }
.q-undo { width: 30px; margin-left: 21px; }
.q-caret { width: 12px; }
.q-redo { margin-left: 7px; }
.q-near { margin-left: -5px; }
.q-more { width: 30px; margin-left: 6px; }
.winctl { display: flex; justify-content: flex-end; height: 33px; }
.winctl button { width: 52px; }
.winctl svg { width: 14px; height: 14px; fill: none; stroke: #d9eafc; stroke-width: 2.5; }
.winctl .thin { stroke-width: 1.5; }

/* tabs */
.tabs { display: flex; height: 42px; background: #0877ec; color: #fff; border-bottom: 1px solid #ccc; }
.tabs > button { padding: 0 41px; }
.tabs > .file { width: 109px; padding: 0 3px 6px 0; }
.tabs > .active { height: 42px; background: #f4f4f4; color: #222; border-radius: 3px 3px 0 0; }
.tabtools { display: flex; align-items: center; height: 34px; margin-left: auto; }
.tabtools button { width: 36px; color: #d9eafc; }
.tabtools svg { width: 22px; height: 22px; fill: none; stroke: currentColor; stroke-width: 1.5; }
.tabtools svg.caret { width: 22px; height: 6px; fill: currentColor; stroke: none; }
.tabtools .vip { gap: 3px; width: auto; padding-left: 6px; color: #fff; }
.tabtools .vip svg { width: 24px; margin-bottom: 5px; }
.tabtools .gem { fill: url(#gold); stroke: none; }
.tabtools .vee { stroke: #fff; stroke-width: 3; }
.tabtools .narrow { width: 28px; }
.tabtools .fold { width: 42px; margin-left: 2px; }
.tabtools .fold svg { width: 20px; height: 20px; }

/* ribbon */
.ribbon { display: flex; height: 118px; color: #808080; border-bottom: 1px solid #ccc; }
.ribbon .caret { color: #999; }
.ribbon > .sep { margin-top: 19px; }
.clip { display: grid; grid-template: 54px 54px / 60px 58px; padding: 5px 0 0 7px; }
.clip .paste { gap: 8px; padding-left: 10px; color: #404040; }
.font { width: 600px; padding-top: 19px; }
.row { display: flex; align-items: center; height: 37px; }
.row1 { padding-left: 22px; }
.row2 { padding-left: 8px; margin-top: 12px; }
.combo { display: flex; align-items: center; height: 37px; padding: 0 6px 4px 12px; border: 1px solid #ddd; border-radius: 3px; background: #ededed; color: #888; }
.combo select { flex: 1; min-width: 0; padding-top: 4px; }
.combo-font { width: 294px; }
.combo-size { width: 93px; margin-left: 10px; padding-left: 14px; }
.wide { width: 52px; }
.row1 .wide { width: 54px; }
.row1 .first { margin-left: 13px; }
.pair { width: 55px; padding-right: 5px; }
.pair .i, .pair .ab { margin: auto; }
.pale { color: #a0a0a0; }
.row .i { width: 24px; height: 24px; }
.row .i.s { width: 22px; height: 22px; }
.row .i.w28 { width: 27px; height: 22px; }
.ribbon .row .caret { color: #bbb; }
.ab { font-size: 22px; font-weight: 500; }
.big { display: flex; padding: 13px 15px 0 10px; color: #404040; }
.big button { flex-direction: column; justify-content: flex-start; width: 75px; height: 91px; padding-top: 6px; border-radius: 3px; }
.big .i { width: 28px; height: 30px; margin-bottom: 11px; }
.big .caret { margin-top: 6px; color: #707070; }
.big .on { background: linear-gradient(#dedede 56px, #ebebeb 56px); }
.off { color: #c4c4c4; }
.off .i { color: #878787; }
.off .caret { color: #bbb; }
.tight { padding: 9px 0 0; color: #222; }
.tight button { width: 63px; }
.tight .i { width: 26px; }
.tight .caret { margin-top: 9px; }

/* main */
.main { display: flex; flex: 1; min-height: 0; }

/* symbol library */
.symbols { display: flex; flex-direction: column; width: 309px; flex: none; border-right: 1px solid #ccc; }
.sym-title { display: flex; align-items: center; justify-content: space-between; height: 36px; padding: 0 14px 0 7px; color: #444; }
.sym-title h2 { font-size: 20px; }
.sym-title .i { width: 20px; height: 20px; color: #808080; stroke-width: 2; }
.sym-search { display: flex; height: 42px; margin: 8px 0 13px 17px; }
.lib { gap: 4px; width: 38px; justify-content: flex-start; color: #404040; }
.lib .i { width: 22px; height: 22px; }
.lib .caret { width: 8px; color: #808080; }
.search { display: flex; align-items: center; width: 209px; padding: 0 9px; border: 1px solid #ddd; border-radius: 3px; }
.search input { flex: 1; min-width: 0; }
.search input::placeholder { color: #808080; }
.search .i { color: #404040; }
.spin { display: flex; flex-direction: column; gap: 6px; width: 30px; margin-left: 7px; }
.spin button { height: 18px; border: 1px solid #ddd; border-radius: 3px; color: #808080; }
.spin .i { width: 16px; height: 16px; }
.sym-body { display: flex; flex: 1; min-height: 0; }
.sym-list { display: flex; flex-direction: column; flex: 1; overflow: hidden; }
.track { flex: none; width: 8px; background: #ececec; }
.track .thumb { background: #d5d5d5; }
.thumb-sym { height: 72%; }
.sec { display: flex; align-items: center; flex: none; height: 52px; padding: 0 2px 0 16px; background: #dfdfdf; color: #000; }
.tri { margin-right: 9px; border: 6px solid transparent; border-top: 9px solid #777; border-bottom: 0; }
.sec h3 { flex: 1; }
.b30 { width: 30px; color: #777; }
.b30 .i { width: 13px; height: 13px; }
.b30.dark { color: #404040; }
.b30.dark .i { width: 17px; height: 17px; stroke-width: 2; }
.b30.mid { color: #555; }
.b30.mid .i { width: 19px; height: 19px; }
.drop { position: relative; margin: 19px 23px 18px 22px; padding: 8px 18px 9px 21px; color: #999; }
.dash { position: absolute; inset: 0; width: 100%; height: 100%; }
.dash rect { width: calc(100% - 2px); height: calc(100% - 2px); fill: none; stroke: #ccc; stroke-width: 2; stroke-dasharray: 9 5; }
.shapes { display: grid; grid-template-columns: repeat(4, 73px); flex: none; padding: 5px 0 2px 2px; }
.shapes svg { width: 73px; height: 73px; fill: #fff; stroke-width: 1; }
.shapes text { font: 7px/8px "Liberation Sans", sans-serif; text-anchor: middle; fill: #444; stroke: none; }
.shapes .tiny { font-size: 6px; }
.shapes .tb { stroke: #86a595; stroke-width: 1.5; }
.shapes .gr { stroke: #2f5f48; stroke-width: 1.5; }
.shapes .gr.thin { stroke-width: 1; }
.bk { stroke: #111; }
.dot { stroke-dasharray: 2 4; }
.thick ellipse { stroke-width: 3; }
.nf { fill: none; }
.sl { fill: #000; }
.next { flex: 1; background: #dfdfdf; }

/* document */
.doc { display: flex; flex-direction: column; flex: 1; min-width: 0; }
.doctabs { display: flex; height: 37px; border-bottom: 1px solid #d5d5d5; }
.doctab { display: flex; align-items: center; width: 277px; padding: 0 13px 0 17px; background: #c4c4c4; color: #0080ff; }
.doctab > svg { width: 22px; height: 22px; margin-right: 12px; }
.doctab button { width: 18px; margin-left: auto; color: #777; }
.doctab .i { width: 14px; height: 14px; }
.board { display: grid; flex: 1; grid-template: 26px minmax(0, 1fr) / 27px minmax(0, 1fr) 12px; min-height: 0; }
.corner { background: #ededed; border-bottom: 1px solid #ddd; }
.hruler, .vscale { display: flex; color: #777; font-size: 15px; }
.hruler { padding-right: 2px; border-bottom: 1px solid #ddd; background: #fafafa; line-height: 16px; }
.hruler span { flex: 1 1 0; min-width: 0; padding-left: 1px; border-right: 1px solid #ddd; }
.vscroll { grid-row: span 2; padding: 120px 1px 0; }
.vscroll .thumb { height: 76%; }
.vruler { display: flex; overflow: hidden; border-right: 1px solid #ddd; background: #fafafa; }
.vscale { flex-direction: column; flex: 1; margin: -12px 0 -4px; }
.vscale span { flex: 1 1 0; min-height: 0; padding: 1px 0 0 1px; border-bottom: 1px solid #ddd; }
.vscale b { display: block; width: 18px; font-weight: normal; line-height: 18px; writing-mode: vertical-rl; transform: rotate(180deg); }
.canvas { overflow: hidden; padding: 33px 0 0 226px; background: #e4e4e4; }
.page { position: relative; width: 630px; height: 589px; outline: 1px solid #aaa; outline-offset: -1px; background: #fff; }
.wires { position: absolute; left: 0; top: 0; width: 630px; height: 589px; fill: none; stroke: #2b2b2b; }
.wires path { marker-end: url(#arrow); }
.wires .plain { marker-end: none; }
.marks { stroke: #1414e0; }
.marks path { marker-end: none; }
.node { position: absolute; display: flex; flex-direction: column; border: 1px solid #ffd23f; border-radius: 1px; background: #fff9f2; color: #444; font-size: 8px; line-height: 11px; text-align: center; white-space: nowrap; }
.node h4 { height: 21px; line-height: 20px; border-bottom: 1px solid #ffd23f; }
.node p { margin: auto; }
.hscroll { height: 13px; padding: 1px 0 0 229px; border: 1px solid #ddd; border-width: 1px 0; }
.hscroll .thumb { width: 648px; max-width: 100%; height: 10px; }
.palette { display: flex; align-items: center; height: 23px; }
.palette button { width: 47px; color: #404040; }
.palette .i { width: 18px; height: 20px; }
.swatches { display: flex; flex: 1; gap: 1px; height: 21px; margin-right: 5px; padding-right: 7px; background: #fff; }
.swatches i { flex: 1; }

/* tool rail */
.rail { display: flex; flex-direction: column; gap: 15px; flex: none; width: 52px; border: 1px solid #ccc; border-width: 0 1px; color: #404040; }
.rail button { height: 51px; }
.rail .close { height: 32px; padding-top: 18px; color: #808080; }
.rail .i { width: 27px; height: 27px; }
.rail .close .i { stroke-width: 2; }
.rail .active { background: #0080ff; color: #fff; }

/* theme panel */
.theme { display: flex; flex-direction: column; flex: none; width: 423px; }
.theme h2 { height: 47px; background: #dfdfdf; color: #000; font-size: 20px; font-weight: bold; line-height: 47px; text-align: center; }
.theme-body { display: flex; flex: 1; min-height: 0; }
.theme-content { flex: 1; overflow: hidden; padding: 23px 0 0 22px; }
.thumb-theme { height: 321px; }
.current { display: flex; }
.preview { width: 195px; height: 192px; border: 1px solid #ddd; background: #fff; }
.preview text { font: 18px "Liberation Mono", monospace; text-anchor: middle; fill: #222; }
.preview .lg { font-size: 22px; fill: #555; }
.current ul { padding-left: 38px; }
.current li { height: 48px; }
.current button { gap: 17px; height: 48px; color: #444; }
.current button svg { width: 32px; height: 24px; }
.kinds { display: grid; grid-template-columns: repeat(4, 94px); margin-top: 23px; color: #000; }
.kinds button { flex-direction: column; justify-content: flex-start; gap: 17px; height: 90px; padding-top: 10px; }
.kinds .active { background: #dfdfdf; }
.kinds .i { width: 32px; height: 26px; color: #404040; }
.gallery { display: grid; grid-template-columns: repeat(2, 180px); gap: 7px; margin-top: 29px; }
.gallery svg { width: 180px; height: 147px; border: 1px solid #ddd; background: #fff; }

/* status bar */
.status { display: flex; align-items: center; flex: none; height: 48px; padding-top: 2px; border-top: 1px solid #ccc; color: #000; }
.status .sep { height: 36px; }
.pages { width: 86px; color: #404040; }
.pages .i { width: 34px; height: 20px; }
.pick { display: flex; align-items: center; width: 167px; padding: 0 4px 0 9px; color: #000; }
.pick select { flex: 1; min-width: 0; }
.pick .caret, .pct .caret { color: #808080; }
.cur { width: 120px; font-weight: bold; }
.add { width: 36px; color: #404040; }
.add .i { width: 15px; height: 15px; stroke-width: 4; }
.s16.i { width: 16px; height: 16px; stroke-width: 4; }
.zoom { display: flex; align-items: center; margin-left: auto; padding-right: 37px; color: #404040; }
.present { width: 26px; height: 26px; }
.z40 { width: 40px; }
.z35 { width: 35px; }
.zoom input { appearance: none; width: 124px; height: 6px; border-radius: 3px; background: linear-gradient(90deg, #c4c4c4 12px, #dfdfdf 12px); }
.zoom input::-webkit-slider-thumb { appearance: none; width: 17px; height: 17px; border: 3px solid #bdbdbd; border-radius: 50%; background: #fff; }
.pct { display: flex; align-items: center; width: 91px; padding-left: 12px; color: #000; }
.pct select { width: 50px; }
```
